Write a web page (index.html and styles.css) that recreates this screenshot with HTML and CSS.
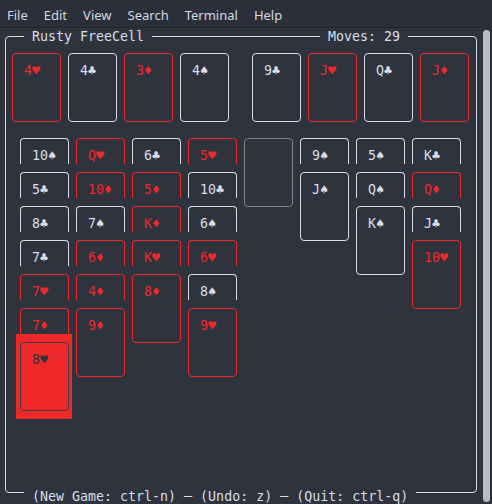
FILE: index.html
```html
<!DOCTYPE html>
<html lang="en">
<head>
<meta charset="utf-8">
<title>Rusty FreeCell</title>
<link rel="stylesheet" href="styles.css">
</head>
<body>
<div class="menubar">
  <span>File</span><span>Edit</span><span>View</span><span>Search</span><span>Terminal</span><span>Help</span>
</div>
<div class="term">
  <div class="frame">
    <span class="title t-left">Rusty FreeCell</span>
    <span class="title t-right">Moves: 29</span>
    <div class="top-row">
      <div class="group">
        <div class="card red">4♥</div>
        <div class="card">4♣</div>
        <div class="card red">3♦</div>
        <div class="card">4♠</div>
      </div>
      <div class="group">
        <div class="card">9♣</div>
        <div class="card red">J♥</div>
        <div class="card">Q♣</div>
        <div class="card red">J♦</div>
      </div>
    </div>
    <div class="tableau">
      <div class="col">
        <div class="card covered">10♠</div>
        <div class="card covered">5♣</div>
        <div class="card covered">8♣</div>
        <div class="card covered">7♣</div>
        <div class="card covered red">7♥</div>
        <div class="card covered red">7♦</div>
        <div class="selected"><div class="card">8♥</div></div>
      </div>
      <div class="col">
        <div class="card covered red">Q♥</div>
        <div class="card covered red">10♦</div>
        <div class="card covered">7♠</div>
        <div class="card covered red">6♦</div>
        <div class="card covered red">4♦</div>
        <div class="card red">9♦</div>
      </div>
      <div class="col">
        <div class="card covered">6♣</div>
        <div class="card covered red">5♦</div>
        <div class="card covered red">K♦</div>
        <div class="card covered red">K♥</div>
        <div class="card red">8♦</div>
      </div>
      <div class="col">
        <div class="card covered red">5♥</div>
        <div class="card covered">10♣</div>
        <div class="card covered">6♠</div>
        <div class="card covered red">6♥</div>
        <div class="card covered">8♠</div>
        <div class="card red">9♥</div>
      </div>
      <div class="col">
        <div class="card empty"></div>
      </div>
      <div class="col">
        <div class="card covered">9♠</div>
        <div class="card">J♠</div>
      </div>
      <div class="col">
        <div class="card covered">5♠</div>
        <div class="card covered">Q♠</div>
        <div class="card">K♠</div>
      </div>
      <div class="col">
        <div class="card covered">K♣</div>
        <div class="card covered red">Q♦</div>
        <div class="card covered">J♣</div>
        <div class="card red">10♥</div>
      </div>
    </div>
    <span class="title t-bottom">(New Game: ctrl-n) ─ (Undo: z) ─ (Quit: ctrl-q)</span>
  </div>
  <div class="scrollbar"><div class="thumb"></div></div>
</div>
</body>
</html>
```
FILE: styles.css
```css
* { box-sizing: border-box; }

html, body {
  margin: 0;
  width: 492px;
  height: 504px;
  overflow: hidden;
  background: #2e333e;
}

body {
  font-family: "DejaVu Sans Mono", "Liberation Mono", monospace;
  font-size: 13.3px;
  color: #d8dee9;
}

.menubar {
  height: 28px;
  display: flex;
  align-items: center;
  gap: 16px;
  padding: 2px 0 0 7px;
  background: #2b2f39;
  border-bottom: 1px solid #22252c;
  font-family: "Noto Sans", "Open Sans", sans-serif;
  font-size: 13px;
  color: #d3dae3;
}

.term {
  display: flex;
  height: 476px;
}

.frame {
  position: relative;
  margin: 8px 0 0 5px;
  width: 472px;
  height: 457px;
  border: 1px solid #d8dee9;
  border-radius: 4px;
  padding: 16px 0 0 6px;
}

.title {
  position: absolute;
  line-height: 17px;
  padding: 0 8px;
  background: #2e333e;
  white-space: pre;
}
.t-left { top: -9px; left: 18px; }
.t-right { top: -9px; left: 314px; }
.t-bottom { bottom: -13px; left: 18px; }

.top-row {
  display: flex;
  gap: 23px;
}
.group {
  display: flex;
  gap: 7px;
}

.card {
  width: 49px;
  height: 69px;
  flex: none;
  border: 1px solid #d8dee9;
  border-radius: 4px;
  padding: 8px 0 0 11px;
  line-height: 17px;
  white-space: nowrap;
}
.card.red {
  border-color: #ef2929;
  color: #ef2929;
}
.card.covered {
  height: 26px;
  border-bottom: none;
  border-radius: 4px 4px 0 0;
  margin-bottom: 8px;
}
.card.empty {
  border-color: #7c818b;
}

.tableau {
  display: flex;
  gap: 7px;
  margin: 16px 0 0 8px;
}
.col {
  width: 49px;
  display: flex;
  flex-direction: column;
}

.selected {
  width: 56px;
  margin: -8px 0 0 -4px;
  padding: 8px 3px 8px 4px;
  background: #ef2929;
}
.selected .card {
  border-color: #3a3f4b;
  color: #2e333e;
}

.scrollbar {
  margin-left: 6px;
  padding-top: 2px;
}
.thumb {
  width: 7px;
  height: 472px;
  border-radius: 4px;
  background: #b7bcc5;
}
```
